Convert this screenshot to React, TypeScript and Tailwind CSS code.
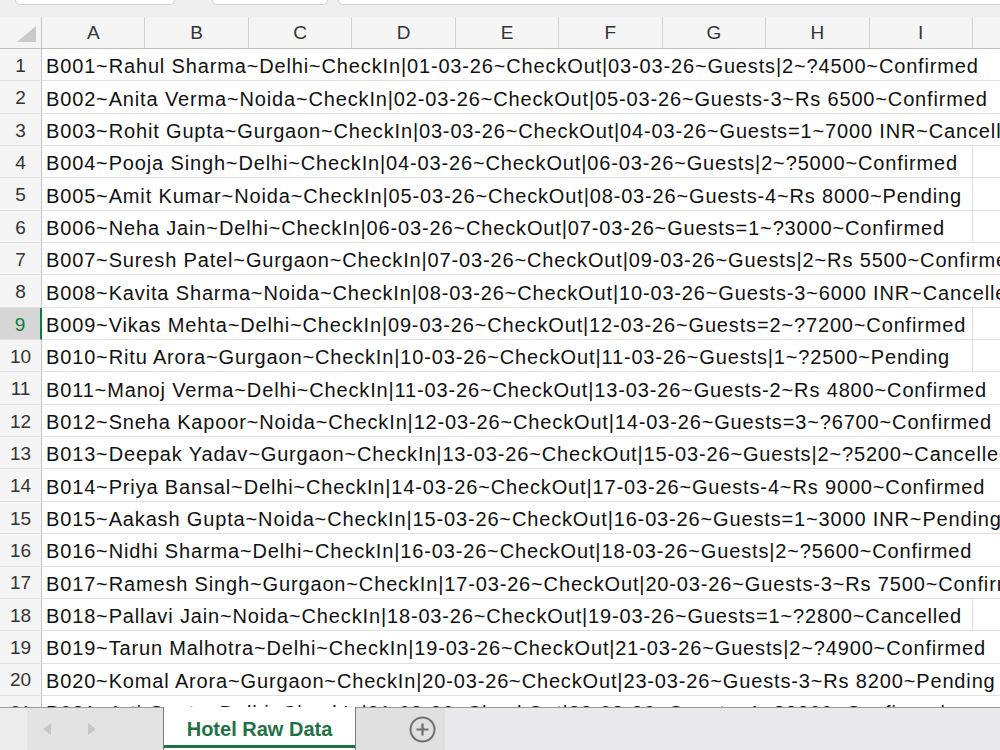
import { useState } from 'react'

const COLS = ['A', 'B', 'C', 'D', 'E', 'F', 'G', 'H', 'I', 'J']

// text + how many columns the overflow covers (gridlines hidden under it)
const ROWS: [string, number][] = [
  ['B001~Rahul Sharma~Delhi~CheckIn|01-03-26~CheckOut|03-03-26~Guests|2~?4500~Confirmed', 10],
  ['B002~Anita Verma~Noida~CheckIn|02-03-26~CheckOut|05-03-26~Guests-3~Rs 6500~Confirmed', 10],
  ['B003~Rohit Gupta~Gurgaon~CheckIn|03-03-26~CheckOut|04-03-26~Guests=1~7000 INR~Cancelled', 10],
  ['B004~Pooja Singh~Delhi~CheckIn|04-03-26~CheckOut|06-03-26~Guests|2~?5000~Confirmed', 9],
  ['B005~Amit Kumar~Noida~CheckIn|05-03-26~CheckOut|08-03-26~Guests-4~Rs 8000~Pending', 9],
  ['B006~Neha Jain~Delhi~CheckIn|06-03-26~CheckOut|07-03-26~Guests=1~?3000~Confirmed', 9],
  ['B007~Suresh Patel~Gurgaon~CheckIn|07-03-26~CheckOut|09-03-26~Guests|2~Rs 5500~Confirmed', 10],
  ['B008~Kavita Sharma~Noida~CheckIn|08-03-26~CheckOut|10-03-26~Guests-3~6000 INR~Cancelled', 10],
  ['B009~Vikas Mehta~Delhi~CheckIn|09-03-26~CheckOut|12-03-26~Guests=2~?7200~Confirmed', 9],
  ['B010~Ritu Arora~Gurgaon~CheckIn|10-03-26~CheckOut|11-03-26~Guests|1~?2500~Pending', 9],
  ['B011~Manoj Verma~Delhi~CheckIn|11-03-26~CheckOut|13-03-26~Guests-2~Rs 4800~Confirmed', 10],
  ['B012~Sneha Kapoor~Noida~CheckIn|12-03-26~CheckOut|14-03-26~Guests=3~?6700~Confirmed', 10],
  ['B013~Deepak Yadav~Gurgaon~CheckIn|13-03-26~CheckOut|15-03-26~Guests|2~?5200~Cancelled', 10],
  ['B014~Priya Bansal~Delhi~CheckIn|14-03-26~CheckOut|17-03-26~Guests-4~Rs 9000~Confirmed', 10],
  ['B015~Aakash Gupta~Noida~CheckIn|15-03-26~CheckOut|16-03-26~Guests=1~3000 INR~Pending', 10],
  ['B016~Nidhi Sharma~Delhi~CheckIn|16-03-26~CheckOut|18-03-26~Guests|2~?5600~Confirmed', 10],
  ['B017~Ramesh Singh~Gurgaon~CheckIn|17-03-26~CheckOut|20-03-26~Guests-3~Rs 7500~Confirmed', 10],
  ['B018~Pallavi Jain~Noida~CheckIn|18-03-26~CheckOut|19-03-26~Guests=1~?2800~Cancelled', 9],
  ['B019~Tarun Malhotra~Delhi~CheckIn|19-03-26~CheckOut|21-03-26~Guests|2~?4900~Confirmed', 10],
  ['B020~Komal Arora~Gurgaon~CheckIn|20-03-26~CheckOut|23-03-26~Guests-3~Rs 8200~Pending', 10],
  ['B021~Arti Gupta~Delhi~CheckIn|21-03-26~CheckOut|22-03-26~Guests=1~?3800~Confirmed', 10],
]

function SheetRow({ n, text, span, selected }: { n: number; text: string; span: number; selected: boolean }) {
  return (
    <div className="flex h-[32.35px] shrink-0">
      <div
        className={`w-[42px] shrink-0 flex items-center justify-center pt-[3px] border-b border-[#e1e1e1] text-[19px] ${
          selected
            ? 'bg-[#d6d6d6] text-[#107c41] border-r-2 border-r-[#107c41]'
            : 'bg-[#f5f5f5] text-[#333] border-r border-r-[#c4c4c4]'
        }`}
      >
        {n}
      </div>
      <div
        className="shrink-0 flex items-center pt-[3px] border-b border-r border-[#e1e1e1] pl-[4px] whitespace-nowrap text-[20px] tracking-[0.85px] text-[#111]"
        style={{ width: span * 103.45 }}
      >
        {text}
      </div>
      {COLS.slice(span).map((c) => (
        <div key={c} className="w-[103.45px] shrink-0 border-b border-r border-[#e1e1e1]" />
      ))}
    </div>
  )
}

export default function App() {
  const [activeRow] = useState(9)

  return (
    <div className="w-[1000px] h-[750px] flex flex-col overflow-hidden bg-white font-['Liberation_Sans',Arial,sans-serif]">
      {/* formula bar remnants */}
      <div className="h-[17px] shrink-0 bg-[#efefef] flex items-start">
        <div className="ml-[15px] w-[160px] h-[5px] bg-white border border-t-0 border-[#d4d4d4] rounded-b-[6px]" />
        <div className="ml-[37px] w-[116px] h-[5px] bg-white border border-t-0 border-[#d4d4d4] rounded-b-[6px]" />
        <div className="ml-[10px] flex-1 h-[5px] bg-white border border-t-0 border-r-0 border-[#d4d4d4] rounded-bl-[6px]" />
      </div>

      {/* column headers */}
      <div className="h-[32px] shrink-0 flex bg-[#f5f5f5] border-b border-[#bdbdbd]">
        <div className="w-[42px] shrink-0 border-r border-[#c4c4c4] relative">
          <svg className="absolute right-[5px] bottom-[6px]" width="19" height="16" viewBox="0 0 19 16">
            <polygon points="19,0 19,16 0,16" fill="#c9c9c9" />
          </svg>
        </div>
        {COLS.map((c) => (
          <div
            key={c}
            className="w-[103.45px] shrink-0 flex items-center justify-center pt-[2px] border-r border-[#d2d2d2] text-[19px] text-[#333]"
          >
            {c}
          </div>
        ))}
      </div>

      {/* cells */}
      <div className="flex-1 overflow-hidden flex flex-col">
        {ROWS.map(([text, span], i) => (
          <SheetRow key={i} n={i + 1} text={text} span={span} selected={i + 1 === activeRow} />
        ))}
      </div>

      {/* sheet tabs */}
      <div className="h-[43px] shrink-0 flex bg-[#e9e9eb]">
        <div className="w-[27px] shrink-0 bg-[#ececec] border-t border-[#9a9a9a]" />
        <div className="w-[136px] shrink-0 bg-[#e3e3e3] border-t border-[#9a9a9a] flex items-center">
          <svg className="ml-[16px]" width="8" height="12" viewBox="0 0 8 12">
            <polygon points="8,0 8,12 0,6" fill="#c6c6c6" />
          </svg>
          <svg className="ml-[37px]" width="8" height="12" viewBox="0 0 8 12">
            <polygon points="0,0 0,12 8,6" fill="#c6c6c6" />
          </svg>
        </div>
        <div className="w-[193px] shrink-0 bg-white border-x border-[#7d7d7d] flex flex-col">
          <div className="flex-1 flex items-center justify-center text-[20px] font-bold text-[#1e7145] pt-[5px]">
            Hotel Raw Data
          </div>
          <div className="h-[3px] bg-[#1e7145] mb-[2px]" />
        </div>
        <div className="w-[89px] shrink-0 bg-[#e0e0e0] border-t border-[#9a9a9a] flex items-center pl-[53px]">
          <svg width="27" height="27" viewBox="0 0 27 27">
            <circle cx="13.5" cy="13.5" r="12" fill="none" stroke="#6f6f6f" strokeWidth="2" />
            <path d="M13.5 7.5v12M7.5 13.5h12" stroke="#6f6f6f" strokeWidth="2.2" />
          </svg>
        </div>
        <div className="flex-1 border-t border-[#9a9a9a]" />
      </div>
    </div>
  )
}
